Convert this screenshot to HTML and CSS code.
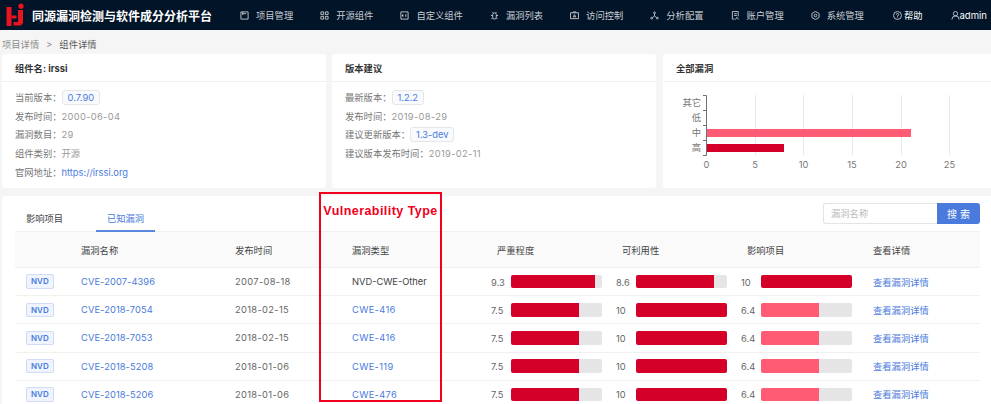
FILE: index.html
```html
<!DOCTYPE html>
<html lang="zh-CN">

<head>
    <meta charset="UTF-8">
    <meta name="viewport" content="width=device-width, initial-scale=1.0">
    <title>组件详情</title>
    <link rel="stylesheet" href="styles.css">
</head>

<body>

    <header class="topbar">
        <svg class="logo" width="20" height="24" viewBox="0 0 20 24">
            <path d="M.5 4h5v19h-5z" fill="#e8141f"/>
            <path d="M5.500 12.500H10.500v3H5.500z" fill="#e8141f"/>
            <path d="M12 7h5v13l-2 2.500H7.500V19H12z" fill="#e8141f"/>
            <circle cx="15" cy="3.200" r="2.600" fill="#e8141f"/>
        </svg>
        <div class="brand">同源漏洞检测与软件成分分析平台</div>
        <nav class="nav">
            <a class="nav-item"><svg viewBox="0 0 10 10"><path d="M1 1h8v8H1zM3 1v3.500M3 3h4"/></svg>项目管理</a>
            <a class="nav-item"><svg viewBox="0 0 10 10"><path d="M1 1h3v3H1zM6 1h3v3H6zM1 6h3v3H1zM6 6h3v3H6z"/></svg>开源组件</a>
            <a class="nav-item"><svg viewBox="0 0 10 10"><path d="M1 1h8v8H1zM3 6V4L2.500 5.500H4M6.500 3.500v3"/></svg>自定义组件</a>
            <a class="nav-item"><svg viewBox="0 0 10 10"><path d="M3 4a2 2 0 0 1 4 0v3a2 2 0 0 1-4 0zM3.500 2 2.500 1M6.500 2l1-1M3 5H1M7 5h2M3 7.500 1.500 9M7 7.500 8.500 9"/></svg>漏洞列表</a>
            <a class="nav-item"><svg viewBox="0 0 10 10"><path d="M.5 2h9v6.500h-9zM3.500 2V1h3v1M3.500 6.500 5 4l1.500 2.500z"/></svg>访问控制</a>
            <a class="nav-item"><svg viewBox="0 0 10 10"><circle cx="5" cy="2" r="1"/><circle cx="1.800" cy="8" r="1"/><circle cx="8.200" cy="8" r="1"/><path d="M5 3v2.500L2.500 7.500M5 5.500l2.500 2"/></svg>分析配置</a>
            <a class="nav-item"><svg viewBox="0 0 10 10"><path d="M8 6V.5H1.500v8.500H4M3.500 3h3M3.500 5h3M5 9.500 6.500 7 8.500 9.500"/></svg>账户管理</a>
            <a class="nav-item"><svg viewBox="0 0 10 10"><path d="M5 .5 9 2.800v4.400L5 9.500 1 7.200V2.800z"/><circle cx="5" cy="5" r="1.500"/></svg>系统管理</a>
            <a class="nav-item nav-help"><svg viewBox="0 0 10 10"><circle cx="5" cy="5" r="4.400"/><path d="M3.700 4a1.300 1.300 0 1 1 1.300 1.300v1M5 7.200v.8"/></svg>帮助</a>
            <a class="nav-item nav-user"><svg viewBox="0 0 10 10"><circle cx="5" cy="3" r="2.400"/><path d="M1 9.500a4 4 0 0 1 8 0"/></svg>admin</a>
        </nav>
    </header>

    <div class="breadcrumb">
        <span>项目详情</span>
        <span class="sep">&gt;</span>
        <span class="current">组件详情</span>
    </div>

    <div class="cards">
        <section class="card">
            <h2 class="card-title">组件名: irssi</h2>
            <div class="card-body">
                <p>当前版本：<span class="tag">0.7.90</span></p>
                <p>发布时间：<span class="value num">2000-06-04</span></p>
                <p>漏洞数目：<span class="value num">29</span></p>
                <p>组件类别：<span class="value">开源</span></p>
                <p>官网地址：<a class="link">https://irssi.org</a></p>
            </div>
        </section>
        <section class="card">
            <h2 class="card-title">版本建议</h2>
            <div class="card-body">
                <p>最新版本：<span class="tag">1.2.2</span></p>
                <p>发布时间：<span class="value num">2019-08-29</span></p>
                <p>建议更新版本：<span class="tag">1.3-dev</span></p>
                <p>建议版本发布时间：<span class="value num">2019-02-11</span></p>
            </div>
        </section>
        <section class="card card-chart">
            <h2 class="card-title">全部漏洞</h2>
            <svg class="chart" width="328" height="106" viewBox="663 82 328 106">
                <g stroke="#e6e9f2" stroke-width="1">
                    <path d="M755.500 95v60M803.500 95v60M852.500 95v60M901.500 95v60M949.500 95v60"/>
                </g>
                <path d="M703 95.500h3.500v60H703M703 110.500h3.500M703 125.500h3.500M703 140.500h3.500" fill="none" stroke="#6e7079"/>
                <rect x="707" y="129" width="204" height="8" fill="#ff5b74"/>
                <rect x="707" y="144" width="77" height="8" fill="#d4002a"/>
                <g class="chart-label" text-anchor="end">
                    <text x="701" y="105.500">其它</text>
                    <text x="701" y="120.500">低</text>
                    <text x="701" y="136">中</text>
                    <text x="701" y="151">高</text>
                </g>
                <g class="chart-label" text-anchor="middle">
                    <text x="706.500" y="168">0</text>
                    <text x="755" y="168">5</text>
                    <text x="803.500" y="168">10</text>
                    <text x="852" y="168">15</text>
                    <text x="901" y="168">20</text>
                    <text x="949.500" y="168">25</text>
                </g>
            </svg>
        </section>
    </div>

    <section class="panel">
        <div class="panel-top">
            <div class="tabs">
                <a class="tab">影响项目</a>
                <a class="tab active">已知漏洞</a>
            </div>
            <div class="search">
                <input class="search-input" type="text" placeholder="漏洞名称">
                <button class="search-btn">搜 索</button>
            </div>
        </div>
        <div class="table">
            <div class="row head">
                <div></div>
                <div>漏洞名称</div>
                <div>发布时间</div>
                <div>漏洞类型</div>
                <div class="indent">严重程度</div>
                <div class="indent">可利用性</div>
                <div class="indent">影响项目</div>
                <div>查看详情</div>
            </div>
            <div class="row">
                <div><span class="nvd">NVD</span></div>
                <a class="link cve">CVE-2007-4396</a>
                <div class="num">2007-08-18</div>
                <div class="plain">NVD-CWE-Other</div>
                <div class="score"><span>9.3</span><div class="bar"><div class="fill high" style="width: 93%"></div></div></div>
                <div class="score"><span>8.6</span><div class="bar"><div class="fill high" style="width: 86%"></div></div></div>
                <div class="score"><span>10</span><div class="bar"><div class="fill high" style="width: 100%"></div></div></div>
                <a class="link">查看漏洞详情</a>
            </div>
            <div class="row">
                <div><span class="nvd">NVD</span></div>
                <a class="link cve">CVE-2018-7054</a>
                <div class="num">2018-02-15</div>
                <a class="link num">CWE-416</a>
                <div class="score"><span>7.5</span><div class="bar"><div class="fill high" style="width: 75%"></div></div></div>
                <div class="score"><span>10</span><div class="bar"><div class="fill high" style="width: 100%"></div></div></div>
                <div class="score"><span>6.4</span><div class="bar"><div class="fill mid" style="width: 64%"></div></div></div>
                <a class="link">查看漏洞详情</a>
            </div>
            <div class="row">
                <div><span class="nvd">NVD</span></div>
                <a class="link cve">CVE-2018-7053</a>
                <div class="num">2018-02-15</div>
                <a class="link num">CWE-416</a>
                <div class="score"><span>7.5</span><div class="bar"><div class="fill high" style="width: 75%"></div></div></div>
                <div class="score"><span>10</span><div class="bar"><div class="fill high" style="width: 100%"></div></div></div>
                <div class="score"><span>6.4</span><div class="bar"><div class="fill mid" style="width: 64%"></div></div></div>
                <a class="link">查看漏洞详情</a>
            </div>
            <div class="row">
                <div><span class="nvd">NVD</span></div>
                <a class="link cve">CVE-2018-5208</a>
                <div class="num">2018-01-06</div>
                <a class="link num">CWE-119</a>
                <div class="score"><span>7.5</span><div class="bar"><div class="fill high" style="width: 75%"></div></div></div>
                <div class="score"><span>10</span><div class="bar"><div class="fill high" style="width: 100%"></div></div></div>
                <div class="score"><span>6.4</span><div class="bar"><div class="fill mid" style="width: 64%"></div></div></div>
                <a class="link">查看漏洞详情</a>
            </div>
            <div class="row">
                <div><span class="nvd">NVD</span></div>
                <a class="link cve">CVE-2018-5206</a>
                <div class="num">2018-01-06</div>
                <a class="link num">CWE-476</a>
                <div class="score"><span>7.5</span><div class="bar"><div class="fill high" style="width: 75%"></div></div></div>
                <div class="score"><span>10</span><div class="bar"><div class="fill high" style="width: 100%"></div></div></div>
                <div class="score"><span>6.4</span><div class="bar"><div class="fill mid" style="width: 64%"></div></div></div>
                <a class="link">查看漏洞详情</a>
            </div>
        </div>
    </section>

    <!-- annotation drawn over the table -->
    <div class="callout">Vulnerability Type</div>

</body>

</html>
```

FILE: styles.css
```css
html, body {
    height: 404px;
    overflow: hidden;
}

body {
    position: relative;
    margin: 0;
    background-color: #f5f5f5;
    color: #666;
    font-family: Inter, "Noto Sans CJK SC", sans-serif;
    font-size: 9.3px;
}

.num {
    letter-spacing: 0.35px;
}

.cve {
    letter-spacing: 0.1px;
}

.topbar {
    display: flex;
    align-items: center;
    height: 30px;
    background-color: #011428;
}

.logo {
    flex: none;
    margin-left: 6px;
    margin-right: 6px;
}

.brand {
    flex: none;
    width: 208px;
    color: #fff;
    font-size: 12px;
    font-weight: 700;
}

.nav {
    display: flex;
    align-items: center;
    gap: 27px;
}

.nav-item {
    display: flex;
    align-items: center;
    gap: 7px;
    color: #c9ccd1;
    white-space: nowrap;
}

.nav-item svg {
    width: 9px;
    height: 9px;
    fill: none;
    stroke: #c9ccd1;
    stroke-width: 1;
}

.nav-help {
    gap: 2px;
    margin-left: 2px;
    color: #fff;
}

.nav-user {
    gap: 0;
    margin-left: 1px;
    color: #fff;
    font-size: 9.5px;
}

.breadcrumb {
    display: flex;
    align-items: center;
    gap: 7px;
    height: 24px;
    padding-left: 2px;
    padding-top: 4px;
    box-sizing: border-box;
    color: #8c8c8c;
}

.breadcrumb .current {
    color: #595959;
}

.cards {
    display: flex;
    gap: 6px;
    height: 134px;
    padding-left: 2px;
}

.card {
    flex: none;
    width: 324px;
    background-color: #fff;
    border-radius: 3px;
}

.card-chart {
    width: 335px;
    margin-left: 1px;
}

.card-title {
    margin: 0;
    height: 27px;
    padding-left: 13px;
    border-bottom: 1px solid #f0f0f0;
    color: #333;
    font-size: 9.3px;
    font-weight: 700;
    line-height: 29px;
}

.card-body {
    padding: 7px 0 0 13px;
    color: #777;
}

.card-body p {
    margin: 0;
    height: 18.7px;
    line-height: 18.7px;
}

.value {
    color: #999;
}

.tag {
    display: inline-block;
    height: 13px;
    padding: 0 5px;
    border: 1px solid #e6e6e6;
    border-radius: 3px;
    background-color: #f8fafd;
    color: #4a7bdc;
    line-height: 13px;
}

.link {
    color: #4a7bdc;
}

.chart {
    display: block;
}

.chart-label text {
    fill: #777;
    font-size: 9.3px;
}

.panel {
    position: relative;
    height: 220px;
    margin: 8px -10px 0 2px;
    background-color: #fff;
    border-radius: 3px;
}

.panel-top {
    display: flex;
    justify-content: space-between;
    height: 35px;
    margin: 0 21px 0 13px;
    border-bottom: 1px solid #f0f0f0;
}

.tabs {
    display: flex;
}

.tab {
    box-sizing: border-box;
    width: 59px;
    height: 36px;
    margin-right: 22px;
    color: #444;
    line-height: 45px;
    text-align: center;
}

.tab.active {
    border-bottom: 2px solid #5b86e0;
    color: #4a7bdc;
}

.search {
    display: flex;
    height: 21.5px;
    margin-top: 6.5px;
}

.search-input {
    box-sizing: border-box;
    width: 114px;
    height: 100%;
    padding: 0 7px;
    border: 1px solid #e4e4e4;
    border-right: 0;
    border-radius: 3px 0 0 3px;
    outline: none;
    font: inherit;
}

.search-input::placeholder {
    color: #bbb;
}

.search-btn {
    width: 43px;
    height: 100%;
    padding: 0;
    border: 0;
    border-radius: 0 3px 3px 0;
    background-color: #4a7bdc;
    color: #fff;
    font: inherit;
    font-size: 10px;
}

.table {
    width: 965px;
    margin-left: 13px;
}

.row {
    display: grid;
    grid-template-columns: 66px 154px 117px 139px 125px 125px 132px 107px;
    align-items: center;
    box-sizing: border-box;
    height: 28.2px;
    border-bottom: 1px solid #f0f0f0;
}

.row.head {
    height: 36px;
    background-color: #fafafa;
    color: #444;
}

.indent {
    padding-left: 6px;
}

.plain {
    color: #444;
}

.nvd {
    display: inline-block;
    height: 12.5px;
    margin-left: 11px;
    padding: 0 4px;
    border: 1px solid #cfdcf5;
    border-radius: 2px;
    background-color: #f0f5fd;
    color: #4a7bdc;
    font-size: 8px;
    font-weight: 600;
    line-height: 12.5px;
}

.score {
    display: flex;
    align-items: center;
}

.score span {
    flex: none;
    width: 19.5px;
    padding-top: 1px;
}

.bar {
    width: 91px;
    height: 13.5px;
    overflow: hidden;
    border-radius: 2px;
    background-color: #e5e5e5;
}

.fill {
    height: 100%;
}

.fill.high {
    background-color: #d4002a;
}

.fill.mid {
    background-color: #ff5b74;
}

.callout {
    position: absolute;
    top: 192px;
    left: 319px;
    box-sizing: border-box;
    width: 123px;
    height: 210px;
    border: 2px solid #f0001c;
    color: #f0001c;
    font-family: "Liberation Sans", sans-serif;
    font-size: 12.5px;
    font-weight: 700;
    letter-spacing: 0.45px;
    line-height: 35px;
    text-align: center;
}
```
